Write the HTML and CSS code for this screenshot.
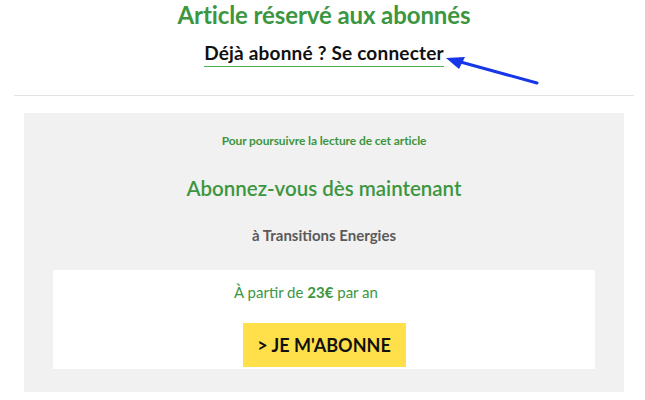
FILE: index.html
```html
<!DOCTYPE html>
<html lang="fr">
<head>
    <meta charset="UTF-8">
    <meta name="viewport" content="width=device-width, initial-scale=1.0">
    <title>Article réservé aux abonnés</title>
    <link rel="stylesheet" href="styles.css">
</head>
<body>

<div class="paywall">
    <!-- En-tête -->
    <div class="paywall-head">
        <h2 class="paywall-title">Article réservé aux abonnés</h2>
        <div class="login-row">
            <a class="login-link" href="#">Déjà abonné ? Se connecter</a>
            <svg class="arrow" width="100" height="32" viewBox="0 0 100 32">
                <line x1="92" y1="26" x2="12" y2="4" stroke="#1736e8" stroke-width="3" stroke-linecap="round"/>
                <polygon points="1,1 20,0 14,12" fill="#1736e8"/>
            </svg>
        </div>
    </div>

    <!-- Offre -->
    <div class="offer">
        <p class="offer-intro">Pour poursuivre la lecture de cet article</p>
        <h3 class="offer-title">Abonnez-vous dès maintenant</h3>
        <p class="offer-site">à Transitions Energies</p>

        <div class="offer-card">
            <p class="offer-price">À partir de <strong>23€</strong> par an</p>
            <a class="offer-button" href="#">&gt; JE M'ABONNE</a>
        </div>
    </div>
</div>

</body>
</html>
```

FILE: styles.css
```css
body {
    margin: 0;
    background-color: #fff;
    font-family: Lato, "Open Sans", sans-serif;
}

.paywall {
    width: 620px;
    margin-left: 14px;
}

/* En-tête */
.paywall-head {
    display: flex;
    flex-direction: column;
    align-items: center;
    border-bottom: 1px solid #e2e2e2;
    padding-bottom: 28px;
}

.paywall-title {
    margin: 0;
    padding-top: 1px;
    font-size: 24px;
    line-height: 28px;
    font-weight: bold;
    color: #3c963f;
    letter-spacing: -0.1px;
}

.login-row {
    position: relative;
    margin-top: 12px;
}

.login-link {
    display: block;
    font-size: 19px;
    line-height: 23px;
    font-weight: bold;
    color: #111;
    text-decoration: none;
    border-bottom: 1px solid #4caf50;
    padding-bottom: 2px;
    letter-spacing: 0.2px;
}

.arrow {
    position: absolute;
    left: 100%;
    top: 16px;
    margin-left: 1px;
}

/* Offre */
.offer {
    margin: 17px 10px 0 10px;
    background-color: #f1f1f1;
    padding: 21px 29px 23px 29px;
    text-align: center;
}

.offer-intro {
    margin: 0;
    font-size: 12px;
    line-height: 14px;
    font-weight: bold;
    color: #3c963f;
    letter-spacing: -0.1px;
}

.offer-title {
    margin: 28px 0 0 0;
    font-size: 20.5px;
    line-height: 24px;
    font-weight: 600;
    color: #3c963f;
}

.offer-site {
    margin: 26px 0 0 0;
    font-size: 15px;
    line-height: 18px;
    font-weight: bold;
    color: #5a5a5a;
}

.offer-card {
    margin-top: 26px;
    background-color: #fff;
    display: flex;
    flex-direction: column;
    align-items: center;
    padding: 12px 0 2px 0;
}

.offer-price {
    margin: 0 36px 0 0;
    font-size: 15px;
    line-height: 20px;
    color: #3c963f;
}

.offer-price strong {
    font-weight: bold;
}

.offer-button {
    margin-top: 21px;
    display: block;
    width: 163px;
    height: 44px;
    line-height: 44px;
    background-color: #ffe04a;
    color: #111;
    font-size: 18px;
    font-weight: bold;
    text-decoration: none;
}
```
